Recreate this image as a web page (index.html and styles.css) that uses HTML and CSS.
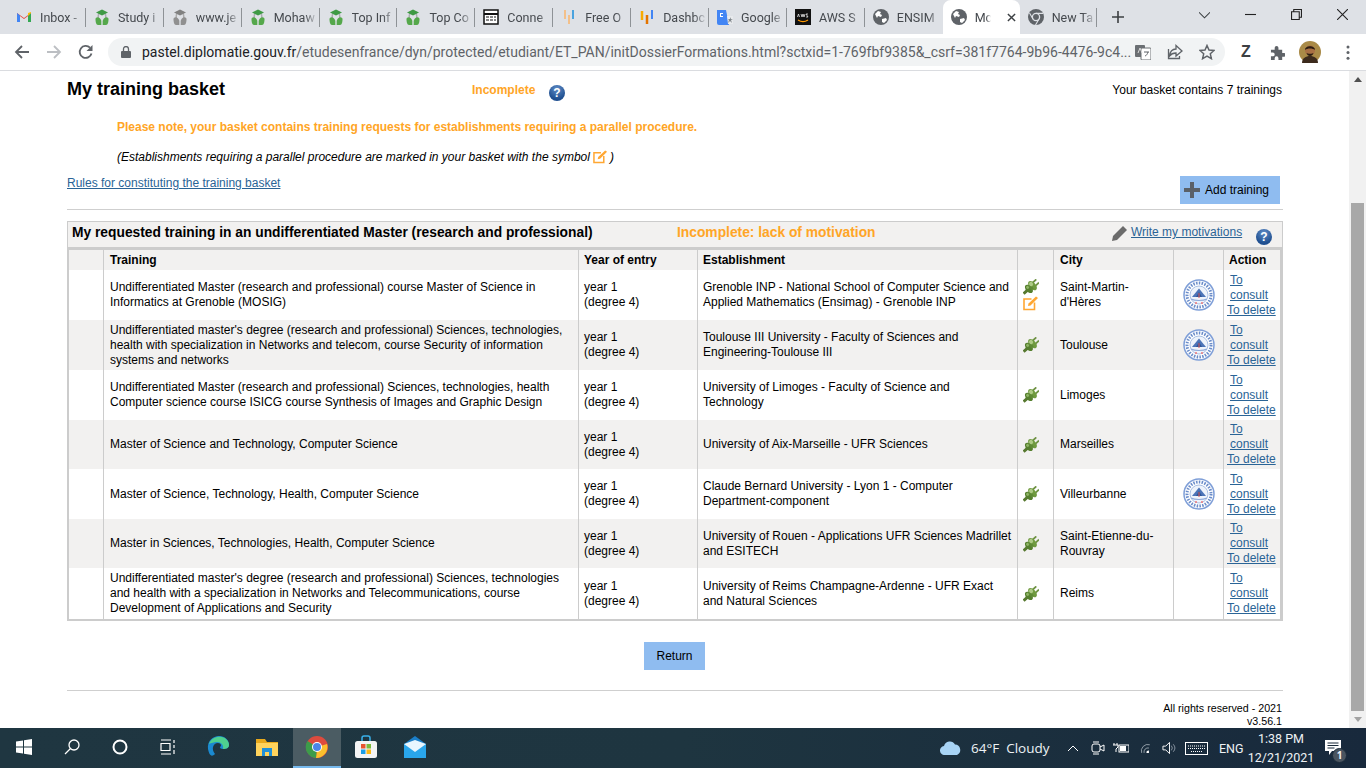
FILE: index.html
```html
<!DOCTYPE html>
<html lang="en">
<head>
<meta charset="utf-8">
<title>My training basket</title>
<link rel="stylesheet" href="styles.css">
</head>
<body>
<svg class="defs" width="0" height="0">
  <symbol id="grad" viewBox="0 0 16 16">
    <path d="M3.500 7a4.500 4.500 0 0 1 9 0v2h-1.500V7a3 3 0 0 0-6 0v2H3.500Z" fill="#a9adb0"/>
    <path d="M8 .500 14 3.500 8 6.500 2 3.500Z" fill="#3f9a45"/>
    <path d="M1.500 10c0-1 1.500-2 3-1.500C6 9 7.300 10.500 7.300 12v4H4c-2 0-2.500-3.500-2.500-6Z" fill="#55a84b"/>
    <path d="M14.500 10c0-1-1.500-2-3-1.500C10 9 8.700 10.500 8.700 12v4H12c2 0 2.500-3.500 2.500-6Z" fill="#55a84b"/>
  </symbol>
  <symbol id="globe" viewBox="0 0 16 16">
    <circle cx="8" cy="8" r="8" fill="#5f6368"/>
    <path d="M2 5l3-3 3 1-1 2 2 1-1 2-3-1-1 2ZM9 10l4-1 1 2-3 3-2-1Z" fill="#fff"/>
  </symbol>
  <symbol id="plug" viewBox="0 0 16 16">
    <g transform="rotate(-42 8 8)">
      <rect x="-2" y="6.500" width="5" height="3" fill="#56782f"/>
      <rect x="12" y="5" width="5" height="1.800" fill="#6e9243"/>
      <rect x="12" y="9.200" width="5" height="1.800" fill="#6e9243"/>
      <ellipse cx="5.200" cy="8" rx="3" ry="5" fill="#567f2f"/>
      <ellipse cx="10" cy="8" rx="3.200" ry="5.600" fill="#6f9a3f"/>
      <rect x="6" y="5" width="3" height="6" fill="#5f8a36"/>
      <ellipse cx="10" cy="5.800" rx="2" ry="2.200" fill="#aecb86"/>
      <ellipse cx="5.200" cy="6" rx="1.400" ry="1.600" fill="#8fb566"/>
    </g>
  </symbol>
  <symbol id="edit" viewBox="0 0 16 16">
    <path d="M11.500 7.500V14.500H1V4H8.500" fill="none" stroke="#ffa733" stroke-width="1.600"/>
    <path d="M5 11 5.500 8.500 13 1.500 15 3 7.500 10.500Z" fill="#ffa733"/>
  </symbol>
  <symbol id="badge" viewBox="0 0 32 32">
    <circle cx="16" cy="16" r="15" fill="#fff" stroke="#7f9fd8" stroke-width="1.500"/>
    <circle cx="16" cy="16" r="12" fill="none" stroke="#6a8cc9" stroke-width="3" stroke-dasharray="1.500 1.300"/>
    <circle cx="16" cy="16" r="9" fill="#eef3fb" stroke="#a9bfe4"/>
    <path d="M16 9.500 23 18H9Z" fill="#4c74b8"/>
    <path d="M16 13 19 18H13Z" fill="#2f5597"/>
    <path d="M8 20c4 2 12 2 16 0" fill="none" stroke="#8eaadb" stroke-width="1.200"/>
    <path d="M15.500 14h1v5h-1Z" fill="#e05a5a"/>
    <circle cx="13" cy="24" r="1" fill="#e77"/><circle cx="19" cy="24" r="1" fill="#e77"/>
  </symbol>
</svg>

<div class="screen">
  <header class="tabstrip">
    <div class="tab"><svg class="fav" viewBox="0 0 16 16"><path d="M1 13V4l7 5 7-5v9h-3V7L8 10 4 7v6Z" fill="#ea4335"/><path d="M1 13V4l3 2.500V13Z" fill="#4285f4"/><path d="M15 13V4l-3 2.500V13Z" fill="#34a853"/><path d="M12 7l3-3V3l-3 1Z" fill="#fbbc04"/></svg><span class="tab-title">Inbox -</span></div>
    <div class="tab"><svg class="fav"><use href="#grad"/></svg><span class="tab-title">Study i</span></div>
    <div class="tab"><svg class="fav grey"><use href="#grad"/></svg><span class="tab-title">www.je</span></div>
    <div class="tab"><svg class="fav"><use href="#grad"/></svg><span class="tab-title">Mohaw</span></div>
    <div class="tab"><svg class="fav"><use href="#grad"/></svg><span class="tab-title">Top Inf</span></div>
    <div class="tab"><svg class="fav"><use href="#grad"/></svg><span class="tab-title">Top Co</span></div>
    <div class="tab"><svg class="fav" viewBox="0 0 16 16"><rect x="1" y="1" width="14" height="14" fill="#fff" stroke="#111" stroke-width="1.500"/><path d="M1 5h14" stroke="#111" stroke-width="2"/><path d="M3 8h3M7 8h3M11 8h2M3 11h3M7 11h3M11 11h2" stroke="#111"/></svg><span class="tab-title">Conne</span></div>
    <div class="tab"><svg class="fav" viewBox="0 0 16 16"><path d="M4 1v9M8 6v9" stroke="#f3c08a" stroke-width="2"/><path d="M12 1v9" stroke="#4aa3df" stroke-width="2"/></svg><span class="tab-title">Free O</span></div>
    <div class="tab"><svg class="fav" viewBox="0 0 16 16"><path d="M3 2v9" stroke="#f9ab00" stroke-width="2.500"/><path d="M8 6v9" stroke="#e37400" stroke-width="2.500"/><path d="M13 1v9" stroke="#4285f4" stroke-width="2"/></svg><span class="tab-title">Dashbc</span></div>
    <div class="tab"><svg class="fav" viewBox="0 0 16 16"><path d="M0 1h9l3 15H2a2 2 0 0 1-2-2Z" fill="#4285f4"/><path d="M10 7h6v8h-5Z" fill="#e8eaed"/><path d="M3 4h3v1H4v2h2v1H3Z" fill="#fff"/><path d="M13 8l1 2h2l-2 1 1 3-2-2-2 2 1-3-1-1h2Z" fill="#80868b"/></svg><span class="tab-title">Google</span></div>
    <div class="tab"><svg class="fav" viewBox="0 0 16 16"><rect width="16" height="16" fill="#111"/><path d="M3 11c3 2 7 2 10 0" stroke="#f90" stroke-width="1.200" fill="none"/><path d="M2.500 8l1-3 1 3M6 5l1 3 1-3 1 3 1-3M11 8h2l-2-3h2" stroke="#fff" stroke-width=".7" fill="none"/></svg><span class="tab-title">AWS S</span></div>
    <div class="tab"><svg class="fav"><use href="#globe"/></svg><span class="tab-title">ENSIM</span></div>
    <div class="tab tab-active"><svg class="fav"><use href="#globe"/></svg><span class="tab-title short">Mc</span><svg class="tab-x" viewBox="0 0 10 10"><path d="M1 1l8 8M9 1l-8 8" stroke="#3c4043" stroke-width="1.600"/></svg></div>
    <div class="tab tab-last"><svg class="fav" viewBox="0 0 16 16"><circle cx="8" cy="8" r="8" fill="#5f6368"/><circle cx="8" cy="8" r="3.600" fill="#5f6368" stroke="#dee1e6" stroke-width="1.300"/><path d="M8 4.400h7M5 10 1.500 4M11 10 7.500 16" stroke="#dee1e6" stroke-width="1.100"/></svg><span class="tab-title">New Ta</span></div>
    <svg class="newtab" viewBox="0 0 12 12"><path d="M6 0v12M0 6h12" stroke="#3c4043" stroke-width="1.600"/></svg>
    <div class="winctl">
      <svg class="win-i" viewBox="0 0 10 10"><path d="M0 3l5 5 5-5" fill="none" stroke="#3c4043"/></svg>
      <svg class="win-i" viewBox="0 0 10 10"><path d="M0 5h10" stroke="#222"/></svg>
      <svg class="win-i" viewBox="0 0 10 10"><path d="M.5 2.500h7v7h-7ZM2.500 2.500v-2h7v7h-2" fill="none" stroke="#222"/></svg>
      <svg class="win-i" viewBox="0 0 10 10"><path d="M0 0l10 10M10 0 0 10" stroke="#222"/></svg>
    </div>
  </header>

  <nav class="toolbar">
    <svg class="nav-i" viewBox="0 0 16 16"><path d="M15 8H2M8 2 2 8l6 6" fill="none" stroke="#5f6368" stroke-width="1.800"/></svg>
    <svg class="nav-i" viewBox="0 0 16 16"><path d="M1 8h13M8 2l6 6-6 6" fill="none" stroke="#bcbfc3" stroke-width="1.800"/></svg>
    <svg class="nav-i" viewBox="0 0 16 16"><path d="M13.500 9.500A6 6 0 1 1 12 3.700" fill="none" stroke="#5f6368" stroke-width="1.800"/><path d="M14.500 1v6h-6Z" fill="#5f6368"/></svg>
    <div class="omnibox">
      <svg class="lock" viewBox="0 0 10 12"><rect y="5" width="10" height="7" rx="1" fill="#5f6368"/><path d="M2.500 5V3a2.500 2.500 0 0 1 5 0v2" fill="none" stroke="#5f6368" stroke-width="1.300"/></svg>
      <span class="url"><span class="url-host">pastel.diplomatie.gouv.fr</span>/etudesenfrance/dyn/protected/etudiant/ET_PAN/initDossierFormations.html?sctxid=1-769fbf9385&amp;_csrf=381f7764-9b96-4476-9c4...</span>
      <svg class="omni-i" viewBox="0 0 16 16"><rect x="0" y="1" width="10" height="12" rx="1" fill="#6b6f73"/><rect x="6" y="4" width="10" height="12" rx="1" fill="#fff" stroke="#6b6f73"/><path d="M3 9l2-5 2 5" fill="none" stroke="#ddd"/><path d="M9 8h5M13 8c-.5 2-2 4-3 4" fill="none" stroke="#5f6368"/></svg>
      <svg class="omni-i" viewBox="0 0 16 16"><path d="M9 5V1.500L15 7l-6 5V9c-3 0-5 1-6.500 3C3 8 5 5 9 5Z" fill="none" stroke="#5f6368" stroke-width="1.300"/><path d="M1.500 5v9.500h11V12" fill="none" stroke="#5f6368" stroke-width="1.300"/></svg>
      <svg class="omni-i" viewBox="0 0 16 16"><path d="M8 1.500 10 6l5 .500-3.700 3.300 1.100 4.900L8 12.200 3.600 14.700l1.100-4.900L1 6.500 6 6Z" fill="none" stroke="#5f6368" stroke-width="1.500"/></svg>
    </div>
    <div class="tools">
      <span class="ext-z">Z</span>
      <svg class="tool-i" viewBox="0 0 16 16"><path d="M1 5h4V3a2 2 0 0 1 4 0v2h4v3.500h2a2 2 0 0 1 0 4h-2V16H9v-2a2 2 0 0 0-4 0v2H1v-4h2a2 2 0 0 0 0-4H1Z" fill="#5f6368"/></svg>
      <svg class="avatar" viewBox="0 0 22 22"><circle cx="11" cy="11" r="11" fill="#a98a47"/><path d="M3 22c0-5 4-7 8-7s8 2 8 7Z" fill="#3c2a1c"/><circle cx="11" cy="9.500" r="5" fill="#a86f43"/><path d="M6 9c0-5 10-5 10 0-2-2-8-2-10 0Z" fill="#2b1c12"/><path d="M7.500 12c1 4 6 4 7 0-1 1-6 1-7 0Z" fill="#2b1c12"/></svg>
      <svg class="dots" viewBox="0 0 4 16"><circle cx="2" cy="2" r="1.600" fill="#5f6368"/><circle cx="2" cy="8" r="1.600" fill="#5f6368"/><circle cx="2" cy="14" r="1.600" fill="#5f6368"/></svg>
    </div>
  </nav>

  <div class="viewport">
    <main class="page">
      <div class="basket-head">
        <h1 class="basket-title">My training basket</h1>
        <span class="status">Incomplete</span>
        <span class="help help-top">?</span>
        <span class="basket-count">Your basket contains 7 trainings</span>
      </div>
      <p class="notice">Please note, your basket contains training requests for establishments requiring a parallel procedure.</p>
      <p class="symbol-note"><span>(Establishments requiring a parallel procedure are marked in your basket with the symbol</span><svg class="edit-inline"><use href="#edit"/></svg><span>)</span></p>
      <div class="rules-row">
        <a class="link" href="#">Rules for constituting the training basket</a>
        <a class="btn btn-add" href="#"><svg class="plus" viewBox="0 0 16 16"><path d="M6 0h4v6h6v4h-6v6H6v-6H0V6h6Z" fill="#5a6068"/></svg>Add training</a>
      </div>
      <hr class="rule">
      <section class="panel">
        <div class="panel-head">
          <h2 class="panel-title">My requested training in an undifferentiated Master (research and professional)</h2>
          <span class="panel-status">Incomplete: lack of motivation</span>
          <svg class="pencil" viewBox="0 0 16 16"><path d="M0 16l1-5L11 1l4 4L5 15Z" fill="#6b6b6b"/></svg>
          <a class="link motivations" href="#">Write my motivations</a>
          <span class="help help-panel">?</span>
        </div>
        <div class="table-wrap">
          <table class="basket">
            <colgroup>
              <col class="c-a"><col class="c-b"><col class="c-c"><col class="c-d"><col class="c-e"><col class="c-f"><col class="c-g"><col class="c-h">
            </colgroup>
            <thead>
              <tr><th></th><th>Training</th><th>Year of entry</th><th>Establishment</th><th></th><th>City</th><th></th><th>Action</th></tr>
            </thead>
            <tbody>
              <tr class="r50">
                <td></td><td>Undifferentiated Master (research and professional) course Master of Science in Informatics at Grenoble (MOSIG)</td>
                <td>year 1<br>(degree 4)</td><td>Grenoble INP - National School of Computer Science and Applied Mathematics (Ensimag) - Grenoble INP</td>
                <td class="icons"><svg class="ico"><use href="#plug"/></svg><svg class="ico"><use href="#edit"/></svg></td>
                <td>Saint-Martin-d'Hères</td><td class="icons"><svg class="seal"><use href="#badge"/></svg></td>
                <td class="actions"><a class="link act-consult" href="#">To consult</a><a class="link act-delete" href="#">To delete</a></td>
              </tr>
              <tr class="r50">
                <td></td><td>Undifferentiated master's degree (research and professional) Sciences, technologies, health with specialization in Networks and telecom, course Security of information systems and networks</td>
                <td>year 1<br>(degree 4)</td><td>Toulouse III University - Faculty of Sciences and Engineering-Toulouse III</td>
                <td class="icons"><svg class="ico"><use href="#plug"/></svg></td>
                <td>Toulouse</td><td class="icons"><svg class="seal"><use href="#badge"/></svg></td>
                <td class="actions"><a class="link act-consult" href="#">To consult</a><a class="link act-delete" href="#">To delete</a></td>
              </tr>
              <tr class="r50">
                <td></td><td>Undifferentiated Master (research and professional) Sciences, technologies, health Computer science course ISICG course Synthesis of Images and Graphic Design</td>
                <td>year 1<br>(degree 4)</td><td>University of Limoges - Faculty of Science and Technology</td>
                <td class="icons"><svg class="ico"><use href="#plug"/></svg></td>
                <td>Limoges</td><td></td>
                <td class="actions"><a class="link act-consult" href="#">To consult</a><a class="link act-delete" href="#">To delete</a></td>
              </tr>
              <tr class="r49">
                <td></td><td>Master of Science and Technology, Computer Science</td>
                <td>year 1<br>(degree 4)</td><td>University of Aix-Marseille - UFR Sciences</td>
                <td class="icons"><svg class="ico"><use href="#plug"/></svg></td>
                <td>Marseilles</td><td></td>
                <td class="actions"><a class="link act-consult" href="#">To consult</a><a class="link act-delete" href="#">To delete</a></td>
              </tr>
              <tr class="r50">
                <td></td><td>Master of Science, Technology, Health, Computer Science</td>
                <td>year 1<br>(degree 4)</td><td>Claude Bernard University - Lyon 1 - Computer Department-component</td>
                <td class="icons"><svg class="ico"><use href="#plug"/></svg></td>
                <td>Villeurbanne</td><td class="icons"><svg class="seal"><use href="#badge"/></svg></td>
                <td class="actions"><a class="link act-consult" href="#">To consult</a><a class="link act-delete" href="#">To delete</a></td>
              </tr>
              <tr class="r49">
                <td></td><td>Master in Sciences, Technologies, Health, Computer Science</td>
                <td>year 1<br>(degree 4)</td><td>University of Rouen - Applications UFR Sciences Madrillet and ESITECH</td>
                <td class="icons"><svg class="ico"><use href="#plug"/></svg></td>
                <td>Saint-Etienne-du-Rouvray</td><td></td>
                <td class="actions"><a class="link act-consult" href="#">To consult</a><a class="link act-delete" href="#">To delete</a></td>
              </tr>
              <tr class="r51">
                <td></td><td>Undifferentiated master's degree (research and professional) Sciences, technologies and health with a specialization in Networks and Telecommunications, course Development of Applications and Security</td>
                <td>year 1<br>(degree 4)</td><td>University of Reims Champagne-Ardenne - UFR Exact and Natural Sciences</td>
                <td class="icons"><svg class="ico"><use href="#plug"/></svg></td>
                <td>Reims</td><td></td>
                <td class="actions"><a class="link act-consult" href="#">To consult</a><a class="link act-delete" href="#">To delete</a></td>
              </tr>
            </tbody>
          </table>
        </div>
      </section>
      <div class="return-row"><a class="btn btn-return" href="#">Return</a></div>
      <hr class="rule foot-rule">
      <footer class="legal">All rights reserved - 2021<br>v3.56.1</footer>
    </main>
    <aside class="scrollbar">
      <svg class="sb-arrow" viewBox="0 0 8 5"><path d="M4 0l4 5H0Z" fill="#505050"/></svg>
      <div class="sb-track"><div class="sb-thumb"></div></div>
      <svg class="sb-arrow" viewBox="0 0 8 5"><path d="M0 0h8L4 5Z" fill="#a3a3a3"/></svg>
    </aside>
  </div>

  <footer class="taskbar">
    <div class="tb-cell"><svg class="tb-i" viewBox="0 0 16 16"><path d="M0 2.500 7 1.500V7.500H0ZM8 1.300 16 0V7.500H8ZM0 8.500H7V14.500L0 13.500ZM8 8.500H16V16L8 14.700Z" fill="#fff"/></svg></div>
    <div class="tb-cell"><svg class="tb-i" viewBox="0 0 16 16"><circle cx="10" cy="6" r="5" fill="none" stroke="#fff" stroke-width="1.300"/><path d="M6.500 9.500 1 15" stroke="#fff" stroke-width="1.300"/></svg></div>
    <div class="tb-cell"><svg class="tb-i" viewBox="0 0 16 16"><circle cx="8" cy="8" r="6.500" fill="none" stroke="#fff" stroke-width="2"/></svg></div>
    <div class="tb-cell"><svg class="tb-i" viewBox="0 0 16 16"><path d="M1 1h10M1 15h10M1 4.500h9v7H1ZM14 1v3M14 6v3M14 11v4" fill="none" stroke="#fff" stroke-width="1.200"/></svg></div>
    <div class="tb-cell tb-gap"><svg class="tb-big" viewBox="0 0 24 24"><path d="M2 14C1 6 7 1 13 1c6 0 10 4 10 9 0 3-3 4-6 4-2 0-3-1-3-2 2-1 1-4-2-4-5 0-7 6-3 11C5 23 3 19 2 14Z" fill="#1b8ad0"/><path d="M3 9c2-6 8-8 13-7 4 1 7 4 7 8 0 3-3 4-6 4 1-4-2-7-6-7-3 0-6 1-8 2Z" fill="#4fd08f"/></svg></div>
    <div class="tb-cell tb-gap1"><svg class="tb-big" viewBox="0 0 24 24"><path d="M1 4h9l2 3h11v14H1Z" fill="#e8a91c"/><path d="M1 8h22v13H1Z" fill="#ffd35c"/><path d="M7 21v-8h10v8h-3v-4h-4v4Z" fill="#1f8fd6"/></svg></div>
    <div class="tb-cell tb-active tb-gap"><svg class="tb-big" viewBox="0 0 24 24"><circle cx="12" cy="12" r="11" fill="#dd4b3e"/><path d="M12 12 22 9a11 11 0 0 1-11 14Z" fill="#fbc02d"/><path d="M12 12 11 23A11 11 0 0 1 2.500 6Z" fill="#3c9c4a"/><circle cx="12" cy="12" r="5" fill="#fff"/><circle cx="12" cy="12" r="4" fill="#4a86e8"/></svg></div>
    <div class="tb-cell tb-gap1"><svg class="tb-big" viewBox="0 0 24 24"><path d="M8 6V3a2 2 0 0 1 2-2h4a2 2 0 0 1 2 2v3" fill="none" stroke="#39b1ea" stroke-width="1.500"/><rect x="1" y="6" width="22" height="17" rx="2.500" fill="#f4f4f4"/><path d="M7 9h4.500v4.500H7Z" fill="#e8542f"/><path d="M12.500 9H17v4.500h-4.500Z" fill="#7cbb3a"/><path d="M7 14.500h4.500V19H7Z" fill="#1c9ee6"/><path d="M12.500 14.500H17V19h-4.500Z" fill="#fdb813"/></svg></div>
    <div class="tb-cell tb-gap1"><svg class="tb-big" viewBox="0 0 24 24"><path d="M1 9 12 1l11 8v14H1Z" fill="#1b7fc9"/><path d="M1 9h22v14H1Z" fill="#29a6ec"/><path d="M1 9l11 8 11-8-11-4Z" fill="#e8f6ff"/></svg></div>
    <div class="tray">
      <svg class="tray-cloud" viewBox="0 0 22 14"><path d="M5 14a4.500 4.500 0 0 1-1-9 6 6 0 0 1 11-1.500A5.500 5.500 0 0 1 17 14Z" fill="#a8d4f5"/></svg>
      <span class="tray-weather">64°F&nbsp; Cloudy</span>
      <svg class="tray-i caret" viewBox="0 0 12 12"><path d="M1 9l5-5 5 5" fill="none" stroke="#fff"/></svg>
      <svg class="tray-i meet" viewBox="0 0 14 14"><rect x="1" y="3" width="8" height="8" rx="2" fill="none" stroke="#fff"/><path d="M9 6l4-2v6l-4-2M2 1h6M2 13h6" fill="none" stroke="#fff"/></svg>
      <svg class="tray-i power" viewBox="0 0 16 14"><path d="M1 2v2M4 2v2M0 4h5v2L3 8v3" fill="none" stroke="#fff"/><rect x="6" y="4" width="10" height="7" fill="none" stroke="#fff"/><rect x="7" y="5" width="6" height="5" fill="#fff"/></svg>
      <svg class="tray-i wifi" viewBox="0 0 16 14"><path d="M2 13A8 8 0 0 1 12 3M5 13A5 5 0 0 1 11 7" fill="none" stroke="#aab4bc"/><path d="M8 13a2.500 2.500 0 0 1 3-3v3Z" fill="#fff"/></svg>
      <svg class="tray-i volume" viewBox="0 0 16 14"><path d="M1 5h3l4-4v12L4 9H1Z" fill="none" stroke="#fff"/><path d="M10 4.500a4 4 0 0 1 0 5M12 3a6 6 0 0 1 0 8" fill="none" stroke="#8c98a4"/></svg>
      <svg class="tray-kb" viewBox="0 0 23 13"><rect x=".5" y=".5" width="22" height="12" fill="none" stroke="#fff"/><path d="M3 4h17M3 6.500h17M6 9.500h11" stroke="#fff" stroke-dasharray="1 1"/></svg>
      <span class="tray-lang">ENG</span>
      <span class="tray-clock">1:38 PM<br>12/21/2021</span>
      <span class="tray-note"><svg class="note-i" viewBox="0 0 16 16"><path d="M0 0h16v11H7l-3 4v-4H0Z" fill="#fff"/><path d="M2.500 3h11M2.500 5.500h11M2.500 8h7" stroke="#1b2b3a"/></svg><span class="note-count">1</span></span>
    </div>
  </footer>
</div>
</body>
</html>
```

FILE: styles.css
```css
* { box-sizing: border-box; }
html, body { margin: 0; padding: 0; height: 100%; overflow: hidden; }
body { font-family: "Liberation Sans", Arial, sans-serif; font-size: 12px; color: #000; background: #fff; }
.defs { display: block; height: 0; width: 0; }
.screen { width: 1366px; height: 768px; display: flex; flex-direction: column; overflow: hidden; }

/* browser tabs */
.tabstrip { height: 34px; flex: none; background: #dee1e6; display: flex; align-items: center; padding-left: 8px; position: relative; }
.tab { width: 77.900px; height: 34px; flex: none; display: flex; align-items: center; padding-left: 8px; gap: 8px; position: relative; font-family: Roboto, sans-serif; font-size: 12.500px; color: #45494e; }
.tab::after { content: ""; position: absolute; right: 0; top: 8px; height: 19px; width: 1px; background: #8e9296; }
.tab-active, .tab-last { width: 77px; }
.tab:nth-child(12)::after, .tab-active::after { display: none; }
.tab-active { background: #fff; border-radius: 8px 8px 0 0; }
.fav { width: 16px; height: 16px; flex: none; }
.fav.grey { filter: grayscale(1); }
.tab-title { display: block; width: 44px; white-space: nowrap; overflow: hidden; -webkit-mask-image: linear-gradient(to right, #000 70%, transparent 100%); mask-image: linear-gradient(to right, #000 70%, transparent 100%); }
.tab-title.short { width: 16px; }
.tab-x { width: 9px; height: 9px; margin-left: 8px; flex: none; }
.newtab { width: 12px; height: 12px; margin-left: 15px; flex: none; }
.winctl { margin-left: auto; display: flex; align-items: center; gap: 35px; padding-right: 18px; position: relative; top: -3px; }
.win-i { width: 11px; height: 11px; flex: none; }

/* toolbar */
.toolbar { height: 37px; flex: none; background: #fff; border-bottom: 1px solid #dadce0; display: flex; align-items: center; padding-left: 14px; }
.nav-i { width: 16px; height: 16px; flex: none; margin-right: 16px; }
.omnibox { width: 1117px; height: 28px; margin-left: -2px; background: #f1f3f4; border-radius: 14px; display: flex; align-items: center; padding-left: 13px; flex: none; }
.lock { width: 10px; height: 12px; flex: none; margin-right: 11px; }
.url { width: 993px; flex: none; white-space: nowrap; overflow: hidden; font-family: Roboto, sans-serif; font-size: 14px; color: #5f6368; }
.url-host { color: #202124; }
.omni-i { width: 16px; height: 16px; flex: none; margin-right: 16px; }
.tools { display: flex; align-items: center; margin-left: 16px; flex: none; }
.ext-z { font-family: "Liberation Sans", sans-serif; font-size: 16px; font-weight: bold; color: #3c4043; width: 11px; margin-right: 18px; }
.tool-i { width: 15px; height: 15px; margin-right: 14px; }
.avatar { width: 22px; height: 22px; margin-right: 25px; }
.dots { width: 4px; height: 15px; }

/* page */
.viewport { flex: 1; min-height: 0; display: flex; }
.page { width: 1349px; flex: none; padding: 0 66px 0 67px; overflow: hidden; }
.basket-head { height: 37px; display: flex; align-items: center; position: relative; }
.basket-title { margin: 0; width: 405px; font-size: 18px; font-weight: bold; line-height: 21px; }
.status { width: 77px; font-weight: bold; color: #ffa526; }
.help { display: inline-flex; align-items: center; justify-content: center; width: 16px; height: 16px; border-radius: 50%; background: radial-gradient(circle at 50% 25%, #5f8cc6, #1f4f90 70%); color: #fff; font-weight: bold; font-size: 12px; flex: none; }
.help-top { position: relative; top: 3px; }
.basket-count { margin-left: auto; padding-right: 1px; }
.notice { margin: 12px 0 0 50px; color: #ffa526; font-weight: bold; line-height: 15px; }
.symbol-note { margin: 15px 0 0 50px; font-style: italic; line-height: 15px; height: 15px; display: flex; align-items: center; }
.edit-inline { width: 15px; height: 15px; margin: -2px 2px 0 3px; flex: none; }
.rules-row { margin-top: 11px; display: flex; justify-content: space-between; align-items: flex-start; padding-right: 3px; height: 28px; }
.link { color: #2a6496; text-decoration: underline; }
.btn { background: #8fbcf0; color: #000; text-decoration: none; display: flex; align-items: center; }
.btn-add { width: 100px; height: 28px; padding-left: 4px; }
.plus { width: 16px; height: 16px; margin-right: 5px; flex: none; }
.rule { margin: 0; border: 0; height: 1px; background: #cfcfcf; }
.rules-row + .rule { margin-top: 5px; }

.panel { margin-top: 11px; }
.panel-head { height: 29px; background: #f2f1f0; border: 1px solid #ccc; border-bottom: 3px solid #ccc; display: flex; align-items: center; padding: 0 0 3px 4px; }
.panel-title { margin: 0; width: 605px; font-size: 13.800px; font-weight: bold; line-height: 18px; flex: none; white-space: nowrap; }
.panel-status { width: 435px; flex: none; font-size: 13.800px; font-weight: bold; color: #ffa526; position: relative; top: -1px; }
.pencil { width: 16px; height: 16px; flex: none; margin-right: 3px; }
.motivations { width: 111px; flex: none; white-space: nowrap; position: relative; top: -1px; }
.help-panel { margin-left: 14px; position: relative; top: 4px; }
.table-wrap { border-left: 2px solid #ccc; border-right: 3px solid #ccc; border-bottom: 2px solid #ccc; }
.basket { width: 1211px; table-layout: fixed; border-collapse: separate; border-spacing: 0; line-height: 15px; }
.c-a { width: 35px; } .c-b { width: 475px; } .c-c { width: 119px; } .c-d { width: 320px; }
.c-e { width: 36px; } .c-f { width: 120px; } .c-g { width: 50px; } .c-h { width: 56px; }
.basket th, .basket td { padding: 0 4px 0 5px; border-right: 1px solid #ccc; text-align: left; vertical-align: middle; }
.basket th:nth-child(2), .basket td:nth-child(2) { padding-left: 6px; }
.basket th:nth-child(6), .basket td:nth-child(6) { padding: 0 12px 0 6px; }
.basket th:last-child, .basket td:last-child { border-right: 0; }
.basket th { height: 20px; background: #f2f1f0; font-weight: bold; }
.basket tbody tr:nth-child(even) td { background: #f2f1f0; }
.r50 td { height: 50px; }
.r49 td { height: 49px; }
.r51 td { height: 51px; }
.basket td.icons { padding: 0; text-align: center; }
.ico { display: block; width: 16px; height: 16px; margin: 0 auto; position: relative; left: -5px; }
.seal { display: block; width: 32px; height: 32px; margin: 0 auto; }
.basket td.actions { padding: 0; }
.act-consult, .act-delete { display: block; }
.act-consult { width: 46px; margin-left: 6px; }
.act-delete { margin-left: 3px; white-space: nowrap; }

.return-row { display: flex; justify-content: center; margin-top: 21px; padding-right: 2px; }
.btn-return { width: 61px; height: 28px; justify-content: center; padding-left: 1px; }
.foot-rule { margin-top: 20px; }
.legal { margin-top: 11px; text-align: right; font-size: 10.700px; line-height: 13px; padding-right: 1px; }

/* scrollbar */
.scrollbar { width: 17px; flex: none; background: #f1f1f1; display: flex; flex-direction: column; align-items: center; }
.sb-arrow { width: 8px; height: 5px; margin: 6px 0; flex: none; }
.sb-track { flex: 1; width: 100%; padding: 115px 2px 0 2px; }
.sb-thumb { height: 100%; background: #a8a8a8; }

/* taskbar */
.taskbar { height: 40px; flex: none; background: linear-gradient(to right, #1f3641, #1e3540 50%, #18293c); display: flex; align-items: stretch; color: #fff; }
.tb-cell { width: 48px; display: flex; align-items: center; justify-content: center; flex: none; border-bottom: 2px solid transparent; }
.tb-gap { margin-left: 2px; }
.tb-gap1 { margin-left: 1px; }
.tb-active { background: #4b5c63; border-bottom-color: #76b9ed; }
.tb-i { width: 16px; height: 16px; }
.tb-big { width: 24px; height: 24px; }
.tray { margin-left: auto; display: flex; align-items: center; font-family: "Open Sans", sans-serif; font-size: 13px; color: #eef2f5; padding-right: 17px; }
.tray-cloud { width: 22px; height: 14px; margin-right: 9px; flex: none; }
.tray-weather { width: 96px; font-size: 13.500px; flex: none; }
.tray-i { flex: none; height: 14px; }
.tray-i.caret { width: 12px; height: 12px; margin-right: 12px; }
.tray-i.meet { width: 14px; margin-right: 8px; }
.tray-i.power { width: 16px; margin-right: 11px; }
.tray-i.wifi { width: 13px; margin-right: 9px; }
.tray-i.volume { width: 15px; margin-right: 8px; }
.tray-kb { width: 23px; height: 13px; margin-right: 11px; flex: none; }
.tray-lang { width: 27px; font-family: Roboto, sans-serif; font-size: 12.500px; flex: none; }
.tray-clock { width: 70px; text-align: center; font-family: Roboto, sans-serif; font-size: 12.500px; line-height: 19px; flex: none; }
.tray-note { width: 32px; height: 40px; margin-left: 1px; position: relative; flex: none; display: flex; align-items: center; justify-content: center; }
.note-i { width: 16px; height: 16px; }
.note-count { position: absolute; left: 15px; bottom: 5px; width: 15px; height: 15px; border-radius: 50%; background: #4a5560; border: 1px solid #1b2b3a; font-size: 10px; line-height: 13px; text-align: center; font-weight: bold; }
```
